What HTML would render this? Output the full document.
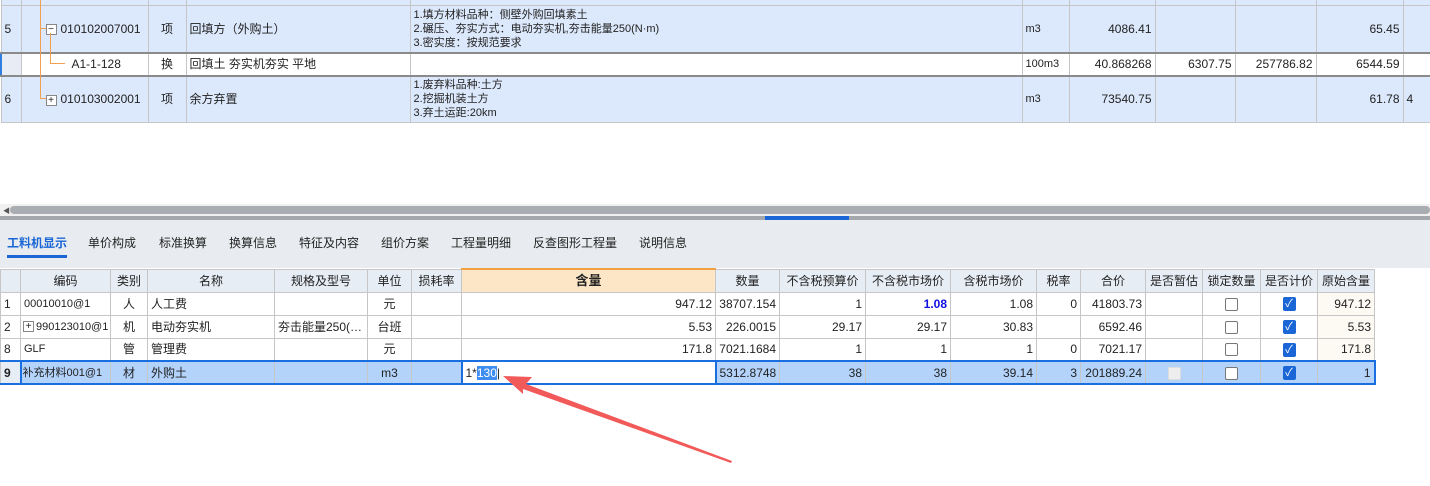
<!DOCTYPE html>
<html><head><meta charset="utf-8"><style>
*{margin:0;padding:0;box-sizing:border-box}
body{width:1430px;height:486px;background:#fff;position:relative;overflow:hidden;font-family:"Liberation Sans","Noto Sans CJK SC",sans-serif;font-size:12px;color:#222}
table{border-collapse:collapse;table-layout:fixed;position:absolute;left:0}
td{border:1px solid #c6c6c6;padding:0 3px;white-space:nowrap;overflow:hidden;vertical-align:middle;line-height:14px}
.r{text-align:right}.c{text-align:center}
#top{top:-1px;width:1430px}
#top tr.b td{background:#dce8fb}
#top tr.s td{background:#fff;border-top:2px solid #8a8a8a;border-bottom:2px solid #8a8a8a}
.box{display:inline-block;width:11px;height:11px;border:1px solid #888;background:#fff;font-size:10px;line-height:9px;text-align:center;vertical-align:middle;margin-right:4px;position:relative;z-index:2}
#bot{top:268px;width:1374px}
#bot tr.h td{background:#e6edf5;text-align:center;height:23px}
#bot td{height:23px}
.cb{display:inline-block;width:13px;height:13px;border:1px solid #777;border-radius:2px;background:#fff;vertical-align:middle}
.ck{display:inline-block;width:13px;height:14px;border-radius:2px;background:#1a66d6;color:#fff;font-size:11px;line-height:14px;text-align:center;vertical-align:middle}
#bot tr.sel td{background:#b3d3fb;border-top:2px solid #1a6fe0;border-bottom:2px solid #1a6fe0}
.ol{position:absolute;background:#f0a050;z-index:3}
</style></head><body>
<table id="top">
<colgroup><col width="20"><col width="127"><col width="38"><col width="224"><col width="612"><col width="47"><col width="86"><col width="80"><col width="81"><col width="87"><col width="28"></colgroup>
<tr class="b" style="height:6px"><td></td><td></td><td></td><td></td><td></td><td></td><td></td><td></td><td></td><td></td><td></td></tr>
<tr class="b" style="height:47px"><td>5</td><td style="padding-left:24px"><span class="box">−</span>010102007001</td><td class="c">项</td><td>回填方（外购土）</td><td style="font-size:11px">1.填方材料品种：侧壁外购回填素土<br>2.碾压、夯实方式：电动夯实机,夯击能量250(N·m)<br>3.密实度：按规范要求</td><td style="font-size:11px">m3</td><td class="r">4086.41</td><td></td><td></td><td class="r">65.45</td><td></td></tr>
<tr class="s" style="height:23px"><td style="background:#e8ecf4;border-left:2px solid #2f7fe0"></td><td style="padding-left:50px">A1-1-128</td><td class="c">换</td><td>回填土 夯实机夯实 平地</td><td></td><td style="font-size:11px">100m3</td><td class="r">40.868268</td><td class="r">6307.75</td><td class="r">257786.82</td><td class="r">6544.59</td><td></td></tr>
<tr class="b" style="height:47px"><td>6</td><td style="padding-left:24px"><span class="box">+</span>010103002001</td><td class="c">项</td><td>余方弃置</td><td style="font-size:11px">1.废弃料品种:土方<br>2.挖掘机装土方<br>3.弃土运距:20km</td><td style="font-size:11px">m3</td><td class="r">73540.75</td><td></td><td></td><td class="r">61.78</td><td>4</td></tr>
</table>
<div class="ol" style="left:40px;top:0;width:1px;height:99px"></div>
<div class="ol" style="left:40px;top:28px;width:6px;height:1px"></div>
<div class="ol" style="left:40px;top:98px;width:6px;height:1px"></div>
<div class="ol" style="left:50px;top:33px;width:1px;height:31px"></div>
<div class="ol" style="left:50px;top:63px;width:15px;height:1px"></div>
<div style="position:absolute;left:0;top:204px;width:1430px;height:12px;background:#f0f0f0"></div>
<div style="position:absolute;left:10px;top:206px;width:1420px;height:8px;background:#a9acb0;border-radius:4px"></div>
<div style="position:absolute;left:3px;top:206px;font-size:7px;color:#555">◀</div>
<div style="position:absolute;left:0;top:216px;width:1430px;height:52px;background:#e8ecf0;border-top:4px solid #a4a7ab"></div>
<div style="position:absolute;left:765px;top:216px;width:84px;height:4px;background:#1a66d6"></div>
<div style="position:absolute;left:0;top:234px;width:1430px;height:20px;font-size:12px;color:#222">
<span style="position:absolute;left:7px;color:#1a66d6;font-weight:bold">工料机显示</span>
<span style="position:absolute;left:88px">单价构成</span>
<span style="position:absolute;left:159px">标准换算</span>
<span style="position:absolute;left:229px">换算信息</span>
<span style="position:absolute;left:299px">特征及内容</span>
<span style="position:absolute;left:381px">组价方案</span>
<span style="position:absolute;left:451px">工程量明细</span>
<span style="position:absolute;left:533px">反查图形工程量</span>
<span style="position:absolute;left:639px">说明信息</span>
</div>
<div style="position:absolute;left:7px;top:255px;width:60px;height:3px;background:#1a66d6"></div>
<table id="bot">
<colgroup><col width="20"><col width="90"><col width="37"><col width="127"><col width="93"><col width="44"><col width="50"><col width="254"><col width="64"><col width="86"><col width="85"><col width="86"><col width="44"><col width="65"><col width="57"><col width="58"><col width="57"><col width="57"></colgroup>
<tr class="h"><td></td><td>编码</td><td>类别</td><td>名称</td><td>规格及型号</td><td>单位</td><td>损耗率</td><td style="background:#fde6c6;border-top:2px solid #f0a040;font-weight:bold;font-size:13px">含量</td><td>数量</td><td>不含税预算价</td><td>不含税市场价</td><td>含税市场价</td><td>税率</td><td>合价</td><td>是否暂估</td><td>锁定数量</td><td>是否计价</td><td>原始含量</td></tr>
<tr><td>1</td><td style="font-size:11px">00010010@1</td><td class="c">人</td><td>人工费</td><td></td><td class="c">元</td><td></td><td class="r">947.12</td><td class="r">38707.154</td><td class="r">1</td><td class="r" style="color:#1010e0;font-weight:bold">1.08</td><td class="r">1.08</td><td class="r">0</td><td class="r">41803.73</td><td></td><td class="c"><span class="cb"></span></td><td class="c"><span class="ck">✓</span></td><td class="r" style="background:#fdf9f3">947.12</td></tr>
<tr><td>2</td><td style="font-size:11px;padding-left:2px"><span class="box" style="margin-right:2px">+</span>99012301​0@1</td><td class="c">机</td><td>电动夯实机</td><td>夯击能量250(…</td><td class="c">台班</td><td></td><td class="r">5.53</td><td class="r">226.0015</td><td class="r">29.17</td><td class="r">29.17</td><td class="r">30.83</td><td></td><td class="r">6592.46</td><td></td><td class="c"><span class="cb"></span></td><td class="c"><span class="ck">✓</span></td><td class="r" style="background:#fdf9f3">5.53</td></tr>
<tr><td>8</td><td style="font-size:11px">GLF</td><td class="c">管</td><td>管理费</td><td></td><td class="c">元</td><td></td><td class="r">171.8</td><td class="r">7021.1684</td><td class="r">1</td><td class="r">1</td><td class="r">1</td><td class="r">0</td><td class="r">7021.17</td><td></td><td class="c"><span class="cb"></span></td><td class="c"><span class="ck">✓</span></td><td class="r" style="background:#fdf9f3">171.8</td></tr>
<tr class="sel"><td style="font-weight:bold;background:#e6edf5">9</td><td style="border-left:2px solid #1a6fe0;padding-left:1px;font-size:11px">补充材料001@1</td><td class="c">材</td><td>外购土</td><td></td><td class="c">m3</td><td></td><td style="background:#fff;border:2px solid #1a6fe0">1*<span style="background:#3d8ef0;color:#fff">130</span>|</td><td class="r">5312.8748</td><td class="r">38</td><td class="r">38</td><td class="r">39.14</td><td class="r">3</td><td class="r">201889.24</td><td class="c"><span class="cb" style="background:#eee;border-color:#ddd"></span></td><td class="c"><span class="cb"></span></td><td class="c"><span class="ck">✓</span></td><td class="r" style="border-right:2px solid #1a6fe0">1</td></tr>
</table>
<svg style="position:absolute;left:0;top:0" width="1430" height="486">
<polygon points="503,376 532,377 526,384 732,461 731,463 523,389 523,394" fill="#f25a5a"/>
</svg>
</body></html>
